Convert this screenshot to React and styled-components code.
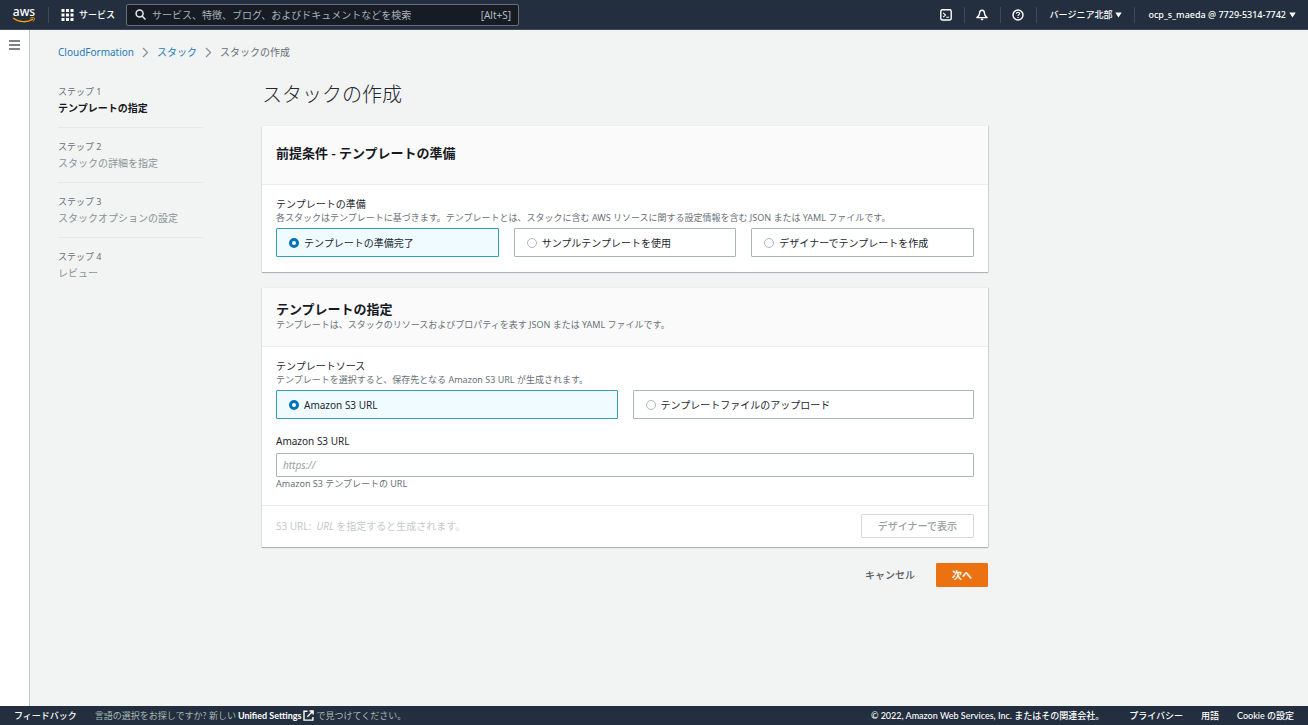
import React, { useState } from "react";
import styled, { createGlobalStyle } from "styled-components";

const GlobalStyle = createGlobalStyle`
  * {
    box-sizing: border-box;
  }
  body {
    margin: 0;
    background: #f2f3f3;
    color: #23272e;
    font-family: "Noto Sans", "Noto Sans CJK JP", sans-serif;
    font-size: 10px;
    line-height: 16px;
  }
  button, input {
    font-family: inherit;
  }
  a {
    text-decoration: none;
  }
`;

const Page = styled.div`
  display: flex;
  flex-direction: column;
  min-height: 100vh;
`;

/* ---- top navigation ---- */

const TopNav = styled.header`
  display: flex;
  align-items: center;
  height: 30px;
  background: #232f3e;
  border-bottom: 1px solid #414d5c;
  color: #fff;
`;

const Logo = styled.a`
  display: flex;
  flex-direction: column;
  align-items: center;
  width: 48px;
  color: #fff;
  font-size: 12px;
  font-weight: 500;
  line-height: 11px;
  svg {
    display: block;
  }
`;

const ServicesButton = styled.button`
  display: flex;
  align-items: center;
  gap: 5px;
  height: 16px;
  padding: 0 11px 0 12px;
  border: 0;
  border-left: 1px solid #3d4957;
  background: none;
  color: #fff;
  font-size: 9px;
  font-weight: 500;
`;

const SearchBox = styled.label`
  display: flex;
  align-items: center;
  gap: 6px;
  flex: 0 1 393px;
  height: 22px;
  padding: 0 7px 0 8px;
  border: 1px solid #687078;
  border-radius: 2px;
  background: #161b24;
  color: #b5bcc2;
  input {
    flex: 1;
    min-width: 0;
    padding: 0;
    border: 0;
    outline: 0;
    background: none;
    color: #fff;
    font-size: 10px;
  }
  input::placeholder {
    color: #a9b2b8;
    opacity: 1;
  }
`;

const NavTools = styled.div`
  display: flex;
  align-items: center;
  margin-left: auto;
`;

const NavItem = styled.button`
  display: flex;
  align-items: center;
  justify-content: center;
  gap: 3px;
  height: 16px;
  min-width: 36px;
  padding: ${(p) => (p.$text ? "0 12px 0 13px" : "0")};
  border: 0;
  border-left: 1px solid ${(p) => (p.$first ? "transparent" : "#3d4957")};
  background: none;
  color: #fff;
  font-size: 9px;
  font-weight: 500;
  white-space: nowrap;
`;

/* ---- page frame ---- */

const Body = styled.div`
  display: flex;
  flex: 1;
`;

const SideRail = styled.aside`
  flex: 0 0 30px;
  padding-top: 9px;
  background: #fff;
  border-right: 1px solid #c4caca;
`;

const MenuButton = styled.button`
  display: block;
  margin: 0 auto;
  padding: 0;
  border: 0;
  background: none;
  color: #545b64;
  line-height: 0;
`;

const Main = styled.main`
  flex: 1;
  padding: 14px 28px;
`;

const Breadcrumb = styled.nav`
  display: flex;
  align-items: center;
  gap: 8px;
  color: #687078;
  a {
    color: #1f7cb8;
  }
  svg {
    color: #879596;
  }
`;

const Wizard = styled.div`
  display: grid;
  grid-template-columns: 145px minmax(0, 726px);
  column-gap: 59px;
  padding-top: 22px;
`;

const Steps = styled.ol`
  margin: 0;
  padding: 2px 0 0;
  list-style: none;
`;

const Step = styled.li`
  padding: 11px 0;
  border-bottom: 1px solid #e6e9e9;
  color: ${(p) => (p.$current ? "#16191f" : "#879596")};
  font-weight: ${(p) => (p.$current ? 700 : 400)};
  &:first-child {
    padding-top: 0;
  }
  &:last-child {
    border-bottom: 0;
  }
`;

const StepNumber = styled.div`
  color: #687078;
  font-size: 9px;
  font-weight: 400;
`;

const Title = styled.h1`
  margin: 0 0 18px;
  font-size: 20px;
  font-weight: 300;
  line-height: 26px;
`;

/* ---- panels ---- */

const Panel = styled.section`
  margin-bottom: 16px;
  background: #fff;
  box-shadow: 0 1px 1px #aab7b8, 1px 0 1px #d5dbdb, -1px 0 1px #e6eaea;
`;

const PanelHeader = styled.header`
  display: flex;
  flex-direction: column;
  justify-content: center;
  height: 59px;
  padding: 0 14px 4px;
  background: #fafafa;
  border-bottom: 1px solid #eaeded;
  h2 {
    margin: 0;
    color: #16191f;
    font-size: 13px;
    font-weight: 600;
    line-height: 20px;
  }
`;

const PanelBody = styled.div`
  display: flex;
  flex-direction: column;
  gap: 14px;
  padding: 11px 14px 15px;
`;

const PanelFooter = styled.footer`
  display: flex;
  align-items: center;
  justify-content: space-between;
  padding: 8px 14px 9px;
  border-top: 1px solid #eaeded;
  color: #c3cacb;
`;

const Hint = styled.p`
  margin: 0;
  color: #687078;
  font-size: 9px;
  line-height: 12px;
`;

const Field = styled.fieldset`
  min-width: 0;
  margin: 0;
  padding: 0;
  border: 0;
  legend {
    padding: 0;
  }
`;

const Tiles = styled.div`
  display: grid;
  grid-template-columns: repeat(${(p) => p.$columns}, 1fr);
  gap: 15px;
  margin-top: 4px;
`;

const Tile = styled.label`
  display: flex;
  align-items: center;
  gap: 5px;
  height: 29px;
  padding: 0 12px;
  border: 1px solid ${(p) => (p.$checked ? "#2ea0b8" : "#aab7b8")};
  border-radius: 1px;
  background: ${(p) => (p.$checked ? "#f0fbff" : "#fff")};
`;

const Radio = styled.input`
  appearance: none;
  flex: none;
  width: 10px;
  height: 10px;
  margin: 0;
  border: 1px solid #aab7b8;
  border-radius: 50%;
  background: #fff;
  &:checked {
    border: 3px solid #0073bb;
  }
`;

const TextField = styled.div`
  display: flex;
  flex-direction: column;
  input {
    height: 24px;
    margin: 4px 0 1px;
    padding: 0 6px;
    border: 1px solid #aab7b8;
    border-radius: 1px;
    background: #fff;
    font-size: 10px;
  }
  input::placeholder {
    color: #95a1a2;
    font-style: italic;
    opacity: 1;
  }
`;

const Button = styled.button`
  height: 24px;
  padding: 0 15px;
  border: 1px solid transparent;
  border-radius: 1px;
  background: none;
  color: #545b64;
  font-size: 10px;
  font-weight: 500;
  line-height: 16px;
`;

const DisabledButton = styled(Button)`
  padding: 0 16px;
  background: #fff;
  border-color: #d5dbdb;
  color: #95a1a2;
`;

const PrimaryButton = styled(Button)`
  background: #ec7211;
  border-color: #ec7211;
  color: #fff;
  font-weight: 700;
`;

const Actions = styled.div`
  display: flex;
  justify-content: flex-end;
  gap: 5px;
`;

/* ---- bottom bar ---- */

const BottomBar = styled.footer`
  display: flex;
  align-items: center;
  gap: 18px;
  height: 19px;
  padding: 0 14px;
  background: #232f3e;
  color: #fff;
  font-family: Lato, "Noto Sans CJK JP", sans-serif;
  font-size: 9px;
  font-weight: 500;
  white-space: nowrap;
  a {
    color: #fff;
  }
`;

const LanguageNote = styled.span`
  display: flex;
  align-items: center;
  gap: 2px;
  margin-right: auto;
  color: #aab7b8;
  font-weight: 400;
  a {
    display: flex;
    align-items: center;
    gap: 2px;
    font-weight: 700;
  }
`;

const Copyright = styled.span`
  padding-right: 7px;
`;

/* ---- icons ---- */

const Smile = () => (
  <svg width="24" height="6" viewBox="0 0 24 6" fill="none" stroke="#f90" strokeWidth="1.3" strokeLinecap="round">
    <path d="M1.5 1.2C7 5.6 15 5.8 20.5 2.4" />
    <path d="M18.6 1C20.4.5 22.2.6 22.4 1.1c.2.6-.3 2-1 3" strokeWidth="1" />
  </svg>
);

const GridIcon = () => (
  <svg width="13" height="12" viewBox="0 0 13 12" fill="currentColor">
    {[0, 4.5, 9].map((y) =>
      [0.5, 5, 9.5].map((x) => <rect key={x + "-" + y} x={x} y={y} width="3" height="3" />)
    )}
  </svg>
);

const SearchIcon = () => (
  <svg width="11" height="11" viewBox="0 0 11 11" fill="none" stroke="#e4e8ea" strokeWidth="1.5" strokeLinecap="round">
    <circle cx="4.6" cy="4.6" r="3.5" />
    <path d="M7.3 7.3l2.7 2.8" />
  </svg>
);

const ShellIcon = () => (
  <svg width="12" height="12" viewBox="0 0 12 12" fill="none" stroke="currentColor" strokeWidth="1.4">
    <rect x="0.8" y="0.8" width="10.4" height="10.2" rx="1.4" />
    <path d="M3.2 3.8l2.3 2.2-2.3 2.2M6.3 8.2h2.6" strokeWidth="1.1" />
  </svg>
);

const BellIcon = () => (
  <svg width="12" height="12" viewBox="0 0 12 12" fill="none" stroke="currentColor" strokeWidth="1.4" strokeLinejoin="round">
    <path d="M6 1.2C4.4 1.2 3.6 2.4 3.6 4c0 2.2-.9 3.2-2.7 4.6h10.2C9.3 7.200 8.400 6.200 8.400 4 8.400 2.400 7.600 1.200 6 1.200z" />
    <path d="M4.900 10h2.200L6 11.200z" fill="currentColor" strokeWidth="1" />
  </svg>
);

const HelpIcon = () => (
  <svg width="12" height="12" viewBox="0 0 12 12" fill="none" stroke="currentColor" strokeWidth="1.4">
    <circle cx="6" cy="6" r="5" />
    <path d="M4.4 4.700C4.400 3.700 5.100 3.200 6 3.200s1.600.5 1.600 1.400C7.600 5.600 6 5.700 6 7" strokeWidth="1.1" />
    <path d="M6 8v1.1" strokeWidth="1.2" />
  </svg>
);

const Caret = () => (
  <svg width="7" height="6" viewBox="0 0 7 6" fill="currentColor">
    <path d="M0.3 0.5h6.4L3.5 5.5z" />
  </svg>
);

const MenuIcon = () => (
  <svg width="11" height="12" viewBox="0 0 11 12" stroke="currentColor" strokeWidth="1.4">
    <path d="M0 2h11M0 6h11M0 10h11" />
  </svg>
);

const Chevron = () => (
  <svg width="7" height="11" viewBox="0 0 7 11" fill="none" stroke="currentColor" strokeWidth="1.3">
    <path d="M1 1l4.5 4.5L1 10" />
  </svg>
);

const ExternalIcon = () => (
  <svg width="11" height="11" viewBox="0 0 11 11" fill="none" stroke="currentColor" strokeWidth="1.4">
    <path d="M4.5 1.2H1v8.900h8.900V7M6.500 1h3.600v3.600M10 1L4.300 6.800" />
  </svg>
);

const steps = ["テンプレートの指定", "スタックの詳細を指定", "スタックオプションの設定", "レビュー"];
const prepareOptions = ["テンプレートの準備完了", "サンプルテンプレートを使用", "デザイナーでテンプレートを作成"];
const sourceOptions = ["Amazon S3 URL", "テンプレートファイルのアップロード"];

const RadioTiles = ({ name, options }) => {
  const [selected, setSelected] = useState(0);

  return (
    <Tiles $columns={options.length}>
      {options.map((option, i) => (
        <Tile key={option} $checked={selected === i}>
          <Radio type="radio" name={name} checked={selected === i} onChange={() => setSelected(i)} />
          {option}
        </Tile>
      ))}
    </Tiles>
  );
};

export default function App() {
  return (
    <>
      <GlobalStyle />
      <Page>
        <TopNav>
          <Logo href="#">
            aws
            <Smile />
          </Logo>
          <ServicesButton>
            <GridIcon />
            サービス
          </ServicesButton>
          <SearchBox>
            <SearchIcon />
            <input type="text" placeholder="サービス、特徴、ブログ、およびドキュメントなどを検索" />
            <span>[Alt+S]</span>
          </SearchBox>
          <NavTools>
            <NavItem $first aria-label="CloudShell"><ShellIcon /></NavItem>
            <NavItem aria-label="通知"><BellIcon /></NavItem>
            <NavItem aria-label="ヘルプ"><HelpIcon /></NavItem>
            <NavItem $text>バージニア北部 <Caret /></NavItem>
            <NavItem $text>ocp_s_maeda @ 7729-5314-7742 <Caret /></NavItem>
          </NavTools>
        </TopNav>

        <Body>
          <SideRail>
            <MenuButton aria-label="メニュー"><MenuIcon /></MenuButton>
          </SideRail>
          <Main>
            <Breadcrumb>
              <a href="#">CloudFormation</a>
              <Chevron />
              <a href="#">スタック</a>
              <Chevron />
              <span>スタックの作成</span>
            </Breadcrumb>

            <Wizard>
              <Steps>
                {steps.map((step, i) => (
                  <Step key={step} $current={i === 0}>
                    <StepNumber>ステップ {i + 1}</StepNumber>
                    {step}
                  </Step>
                ))}
              </Steps>

              <div>
                <Title>スタックの作成</Title>

                <Panel>
                  <PanelHeader>
                    <h2>前提条件 - テンプレートの準備</h2>
                  </PanelHeader>
                  <PanelBody>
                    <Field>
                      <legend>テンプレートの準備</legend>
                      <Hint>
                        各スタックはテンプレートに基づきます。テンプレートとは、スタックに含む AWS リソースに関する設定情報を含む JSON または YAML ファイルです。
                      </Hint>
                      <RadioTiles name="prepare" options={prepareOptions} />
                    </Field>
                  </PanelBody>
                </Panel>

                <Panel>
                  <PanelHeader>
                    <h2>テンプレートの指定</h2>
                    <Hint>テンプレートは、スタックのリソースおよびプロパティを表す JSON または YAML ファイルです。</Hint>
                  </PanelHeader>
                  <PanelBody>
                    <Field>
                      <legend>テンプレートソース</legend>
                      <Hint>テンプレートを選択すると、保存先となる Amazon S3 URL が生成されます。</Hint>
                      <RadioTiles name="source" options={sourceOptions} />
                    </Field>
                    <TextField>
                      <label htmlFor="s3-url">Amazon S3 URL</label>
                      <input id="s3-url" type="text" placeholder="https://" />
                      <Hint>Amazon S3 テンプレートの URL</Hint>
                    </TextField>
                  </PanelBody>
                  <PanelFooter>
                    <span>S3 URL:&nbsp; <em>URL</em> を指定すると生成されます。</span>
                    <DisabledButton disabled>デザイナーで表示</DisabledButton>
                  </PanelFooter>
                </Panel>

                <Actions>
                  <Button>キャンセル</Button>
                  <PrimaryButton>次へ</PrimaryButton>
                </Actions>
              </div>
            </Wizard>
          </Main>
        </Body>

        <BottomBar>
          <a href="#">フィードバック</a>
          <LanguageNote>
            言語の選択をお探しですか? 新しい
            <a href="#">Unified Settings <ExternalIcon /></a>
            で見つけてください。
          </LanguageNote>
          <Copyright>© 2022, Amazon Web Services, Inc. またはその関連会社。</Copyright>
          <a href="#">プライバシー</a>
          <a href="#">用語</a>
          <a href="#">Cookie の設定</a>
        </BottomBar>
      </Page>
    </>
  );
}
